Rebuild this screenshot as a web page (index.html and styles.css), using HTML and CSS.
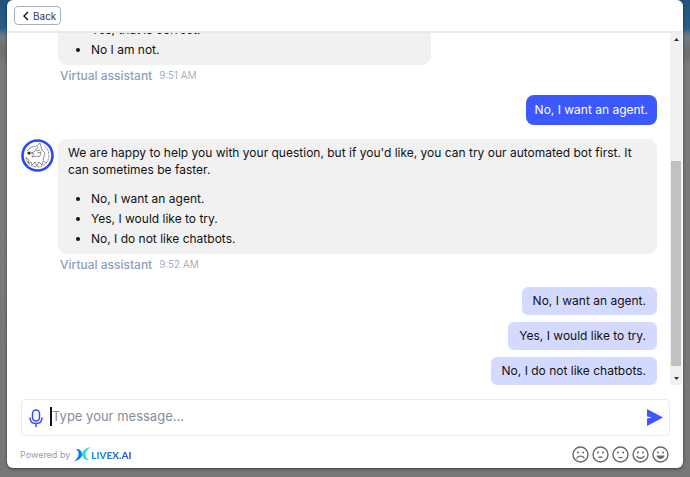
FILE: index.html
```html
<!DOCTYPE html>
<html lang="en">
<head>
<meta charset="utf-8">
<meta name="viewport" content="width=device-width, initial-scale=1">
<title>Chat</title>
<link rel="stylesheet" href="styles.css">
</head>
<body>
<main class="chat">
  <header class="chat-header">
    <button class="back" type="button">
      <svg width="6" height="10" viewBox="0 0 6 10" fill="none" stroke="#161b22" stroke-width="1.5" aria-hidden="true"><path d="M5 1 1 5l4 4"/></svg>
      Back
    </button>
  </header>

  <div class="history">
    <section class="messages">
      <article class="bot">
        <div class="bubble bubble-short">
          <ul><li>Yes, that is correct.</li><li>No I am not.</li></ul>
        </div>
        <p class="meta"><span class="sender">Virtual assistant</span><time>9:51 AM</time></p>
      </article>

      <p class="sent">No, I want an agent.</p>

      <article class="bot">
        <svg class="avatar" width="33" height="33" viewBox="0 0 33 33" fill="none" aria-hidden="true">
          <circle cx="16.5" cy="16.5" r="15" fill="#fff" stroke="#2849f5" stroke-width="2.6"/>
          <g stroke="#444" stroke-width=".6">
            <path d="M5 18c0 6 5 10 11 10 7 0 12-5 12-12 0-4-2-7-5-9" stroke-dasharray="2.500 .8"/>
            <path d="M6 12c2-3 6-5 10-5l3-3 2 7 3 3-2 7"/>
            <path d="m17 8-4 5-3 1 3 1-2 3 5-1m-1-5 4-1m-3 3 4-1-1 4-3 1"/>
            <path d="M5 19l3 2-1 3 3-1 1 3 3-3 2 4 2-4 3 3 1-4 3 2"/>
          </g>
          <circle cx="8" cy="14" r="1.600" fill="#222"/>
        </svg>
        <div class="bubble">
          <p>We are happy to help you with your question, but if you'd like, you can try our automated bot first. It can sometimes be faster.</p>
          <ul><li>No, I want an agent.</li><li>Yes, I would like to try.</li><li>No, I do not like chatbots.</li></ul>
        </div>
        <p class="meta"><span class="sender">Virtual assistant</span><time>9:52 AM</time></p>
      </article>

      <div class="replies">
        <button type="button">No, I want an agent.</button>
        <button type="button">Yes, I would like to try.</button>
        <button type="button">No, I do not like chatbots.</button>
      </div>
    </section>
    <div class="scrollbar" aria-hidden="true">
      <svg width="13" height="13" viewBox="0 0 13 13"><path d="M4 8h5L6.500 5z" fill="#333"/></svg>
      <div class="track"><div class="thumb"></div></div>
      <svg width="13" height="13" viewBox="0 0 13 13"><path d="M4 5h5L6.500 8z" fill="#333"/></svg>
    </div>
  </div>

  <form class="composer">
    <button type="button" aria-label="Record voice">
      <svg width="14" height="18" viewBox="0 0 14 18" fill="none" stroke="#2f4bff" stroke-width="1.5"><rect x="3.500" y="1" width="7" height="11" rx="3.500"/><path d="M1 8.500c0 4 2.500 6 6 6s6-2 6-6M7 14.500v3.500"/></svg>
    </button>
    <span class="caret"></span>
    <input type="text" aria-label="Message" placeholder="Type your message...">
    <button type="button" aria-label="Send">
      <svg width="16" height="17" viewBox="0 0 16 17"><path d="M0 0v7.500l5 1-5 1V17l16-8.500z" fill="#3c58ff"/></svg>
    </button>
  </form>

  <footer class="chat-footer">
    <span>Powered by</span>
    <a class="brand" href="#">
      <svg width="17" height="15" viewBox="0 0 17 15" aria-hidden="true">
        <path d="M2 2c4 0 6 2 6 5.500C8 11 5 13 0 14.500 3 12 4 10 4.500 8 5 5.500 4 3.500 2 2z" fill="#1478f4"/>
        <path d="M17 0c-5 1-9 3.500-9 7.500 0 3.500 3 5.500 7 5.500-2-1.500-3.500-3-3.500-5.500C11.500 4.500 14 2 17 0z" fill="#30dcd2"/>
      </svg>
      <span>LIVEX.AI</span>
    </a>
    <div class="ratings">
      <button type="button" aria-label="Very unhappy"><svg width="17" height="17" viewBox="0 0 17 17"><circle cx="8.500" cy="8.500" r="7.500"/><path d="M5 12c1-2.500 6-2.500 7 0"/><path class="eyes" d="M5.900 6.500h.01M11.100 6.500h.01"/></svg></button>
      <button type="button" aria-label="Unhappy"><svg width="17" height="17" viewBox="0 0 17 17"><circle cx="8.500" cy="8.500" r="7.500"/><path d="M7 11.300q1.500-.6 3 0"/><path class="eyes" d="M5.900 6.500h.01M11.100 6.500h.01"/></svg></button>
      <button type="button" aria-label="Neutral"><svg width="17" height="17" viewBox="0 0 17 17"><circle cx="8.500" cy="8.500" r="7.500"/><path d="M7 11.300q1.500.6 3 0"/><path class="eyes" d="M5.900 6.500h.01M11.100 6.500h.01"/></svg></button>
      <button type="button" aria-label="Happy"><svg width="17" height="17" viewBox="0 0 17 17"><circle cx="8.500" cy="8.500" r="7.500"/><path d="M5 10.300c1 2.500 6 2.500 7 0"/><path class="eyes" d="M5.900 6.500h.01M11.100 6.500h.01"/></svg></button>
      <button type="button" aria-label="Very happy"><svg width="17" height="17" viewBox="0 0 17 17"><circle cx="8.500" cy="8.500" r="7.500"/><path class="grin" d="M4.500 9.500h8c-.5 4.500-7.500 4.500-8 0z"/><path class="eyes" d="M5.900 6.500h.01M11.100 6.500h.01"/></svg></button>
    </div>
  </footer>
</main>
</body>
</html>
```
FILE: styles.css
```css
* { box-sizing: border-box; }

body {
  margin: 0;
  height: 100vh;
  padding: 0 7px 9px;
  background: linear-gradient(#20547c 0, #275d88 28px, #707a80 36px, #6e6e6e 54px, #7b7b7b 66px, #777 100%);
  font-family: Inter, "Open Sans", sans-serif;
  font-size: 12px;
  color: #111;
}

p, ul { margin: 0; }

button {
  border: 0;
  padding: 0;
  background: none;
  font: inherit;
  color: inherit;
}

svg { display: block; }

.chat {
  height: 100%;
  display: flex;
  flex-direction: column;
  background: #fff;
  border-radius: 6px;
  box-shadow: 0 1px 3px rgba(0, 0, 0, .5);
}

.chat-header {
  padding: 6px 7px;
  border-bottom: 2px solid #e9eaee;
}

.back {
  display: flex;
  align-items: center;
  gap: 4px;
  height: 19px;
  padding: 0 4px 0 8px;
  border: 1px solid #a7afbc;
  border-radius: 4px;
  font-size: 10px;
  color: #343a46;
}

.history {
  flex: 1;
  min-height: 0;
  display: flex;
}

.messages {
  flex: 1;
  display: flex;
  flex-direction: column;
  justify-content: flex-end;
  overflow: hidden;
  padding: 0 13px 0 14px;
}

.bot {
  display: grid;
  grid-template-columns: 37px 1fr;
}

.bubble,
.meta { grid-column: 2; }

.avatar { grid-row: 1; }

.bubble {
  padding: 5px 10px;
  border-radius: 9px;
  background: #f1f1f1;
  line-height: 17px;
}

.bubble-short { width: 62.3%; }

.bubble ul {
  padding-left: 23px;
  line-height: 20px;
}

.bubble p + ul { margin-top: 11px; }

.meta {
  display: flex;
  align-items: center;
  gap: 7px;
  height: 20px;
  padding-left: 2px;
  color: #8ea0b6;
}

.sender { font-weight: 500; }

.meta time {
  font-size: 10px;
  font-weight: 300;
}

.sent {
  align-self: flex-end;
  margin: 10px 0 14px;
  padding: 0 9px;
  border-radius: 8px;
  background: #3c58ff;
  color: #fff;
  line-height: 30px;
}

.replies {
  display: flex;
  flex-direction: column;
  align-items: flex-end;
  gap: 7px;
  margin-top: 13px;
}

.replies button {
  padding: 0 11px;
  border-radius: 6px;
  background: #d4daff;
  line-height: 28px;
}

.scrollbar {
  width: 12px;
  margin-right: 1px;
  display: flex;
  flex-direction: column;
  background: #f1f1f1;
}

.track {
  flex: 1;
  display: flex;
  flex-direction: column;
  justify-content: flex-end;
  padding: 0 1px 6px;
}

.thumb {
  height: 64%;
  background: #c1c1c1;
}

.composer {
  display: flex;
  align-items: center;
  height: 37px;
  margin: 14px 13px 0 14px;
  padding: 0 6px 0 7px;
  border: 1px solid #e9eaee;
  border-radius: 4px;
}

.caret {
  width: 2px;
  height: 19px;
  margin: 0 0 3px 7px;
  background: #111;
}

.composer input {
  flex: 1;
  min-width: 0;
  padding: 0 0 3px;
  border: 0;
  outline: 0;
  background: none;
  font: inherit;
  font-size: 13px;
}

.composer input::placeholder { color: #848d9e; }

.chat-footer {
  display: flex;
  align-items: center;
  padding: 10px 14px 5px 13px;
  font-size: 9px;
  color: #8ea0b6;
}

.brand {
  display: flex;
  align-items: center;
  margin-left: 4px;
  font-family: Lato, sans-serif;
  font-size: 10px;
  font-weight: 900;
  text-decoration: none;
}

.brand span {
  background: linear-gradient(90deg, #159ee8, #3044ed);
  background-clip: text;
  color: transparent;
}

.ratings {
  display: flex;
  gap: 3px;
  margin-left: auto;
}

.ratings svg {
  fill: none;
  stroke: #6a6a6a;
  stroke-width: 1.4;
  stroke-linecap: round;
}

.ratings .eyes { stroke-width: 2; }

.ratings .grin { fill: #6a6a6a; stroke: none; }
```
